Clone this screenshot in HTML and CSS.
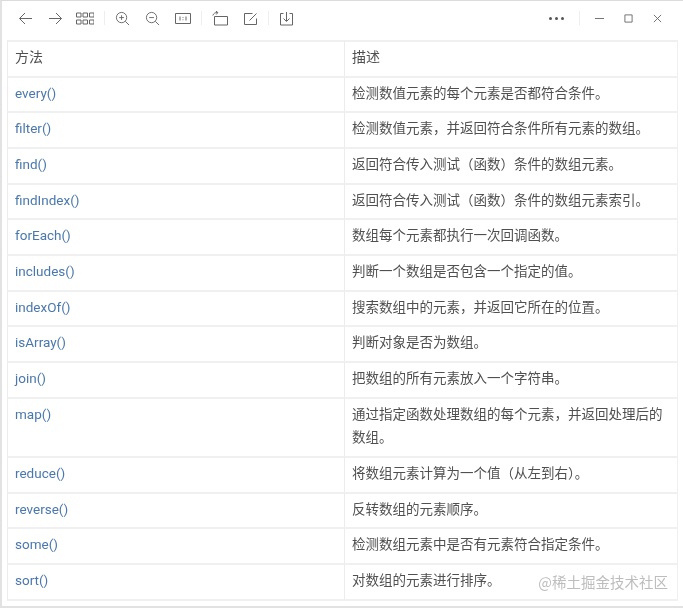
FILE: index.html
```html
<!DOCTYPE html>
<html lang="zh">
<head>
  <meta charset="UTF-8" />
  <title>数组方法</title>
  <link rel="stylesheet" href="styles.css">
</head>
<body>
  <div class="window">
    <div class="toolbar">
      <svg class="icon" viewBox="0 0 15 15"><path d="M14 7.500H1.500M7 2 1.500 7.500 7 13"/></svg>
      <svg class="icon" viewBox="0 0 15 15"><path d="M1 7.500h12.500M8 2l5.500 5.500L8 13"/></svg>
      <svg class="icon grid" viewBox="0 0 18 13"><path d="M.5 1h4.500v4H.5zM7 1h4.500v4H7zM13.500 1H18v4h-4.500zM.5 8h4.500v4H.5zM7 8h4.500v4H7zM13.500 8H18v4h-4.500z"/></svg>
      <span class="sep"></span>
      <svg class="icon" viewBox="0 0 16 16"><circle cx="7" cy="7" r="5.500"/><path d="M4.500 7h5M7 4.500v5M11 11l4 4"/></svg>
      <svg class="icon" viewBox="0 0 16 16"><circle cx="7" cy="7" r="5.500"/><path d="M4.500 7h5M11 11l4 4"/></svg>
      <svg class="icon ratio" viewBox="0 0 16 13"><path d="M.5 1.500h15v10H.5zM5 4.500v4M11 4.500v4M8 5v.8M8 7.400v.8"/></svg>
      <span class="sep"></span>
      <svg class="icon ratio tall" viewBox="0 0 16 15"><path d="M2.500 5.500h13v8.500h-13zM.8 4.500C1.500 2.500 3 1.500 5.500 1.500M3.800 0l2 1.500-1.500 2"/></svg>
      <svg class="icon" viewBox="0 0 15 15"><path d="M13.500 7.500v6h-12v-11h8M6.500 9.500l7-7"/></svg>
      <span class="sep"></span>
      <svg class="icon" viewBox="0 0 15 15"><path d="M4.500 2.500h-3v11.500h12V2.500h-3M7.500 1v9M4.500 7.500l3 3 3-3"/></svg>
      <div class="win-buttons">
        <span class="dots"><i></i><i></i><i></i></span>
        <span class="sep"></span>
        <svg class="icon small" viewBox="0 0 10 10"><path d="M0 5h10"/></svg>
        <svg class="icon small" viewBox="0 0 10 10"><path d="M1 1h8v8H1z"/></svg>
        <svg class="icon small" viewBox="0 0 10 10"><path d="M1 1l8 8M9 1 1 9"/></svg>
      </div>
    </div>
    <table class="methods">
      <thead>
        <tr><th>方法</th><th>描述</th></tr>
      </thead>
      <tbody>
        <tr><td><a>every()</a></td><td>检测数值元素的每个元素是否都符合条件。</td></tr>
        <tr><td><a>filter()</a></td><td>检测数值元素，并返回符合条件所有元素的数组。</td></tr>
        <tr><td><a>find()</a></td><td>返回符合传入测试（函数）条件的数组元素。</td></tr>
        <tr><td><a>findIndex()</a></td><td>返回符合传入测试（函数）条件的数组元素索引。</td></tr>
        <tr><td><a>forEach()</a></td><td>数组每个元素都执行一次回调函数。</td></tr>
        <tr><td><a>includes()</a></td><td>判断一个数组是否包含一个指定的值。</td></tr>
        <tr><td><a>indexOf()</a></td><td>搜索数组中的元素，并返回它所在的位置。</td></tr>
        <tr><td><a>isArray()</a></td><td>判断对象是否为数组。</td></tr>
        <tr><td><a>join()</a></td><td>把数组的所有元素放入一个字符串。</td></tr>
        <tr><td><a>map()</a></td><td>通过指定函数处理数组的每个元素，并返回处理后的数组。</td></tr>
        <tr><td><a>reduce()</a></td><td>将数组元素计算为一个值（从左到右）。</td></tr>
        <tr><td><a>reverse()</a></td><td>反转数组的元素顺序。</td></tr>
        <tr><td><a>some()</a></td><td>检测数组元素中是否有元素符合指定条件。</td></tr>
        <tr><td><a>sort()</a></td><td>对数组的元素进行排序。</td></tr>
      </tbody>
    </table>
    <div class="watermark">@稀土掘金技术社区</div>
  </div>
</body>
</html>
```

FILE: styles.css
```css
html, body {
  margin: 0;
  height: 100%;
}
body {
  background: #fff;
  color: #505050;
  font-family: "Noto Sans CJK SC", sans-serif;
  font-size: 13.5px;
  overflow: hidden;
}
.window {
  position: relative;
  height: 608px;
  box-sizing: border-box;
  padding: 0 4px 0 5px;
  border-top: 1px solid #dcdcdc;
  border-left: 2px solid #e2e2e2;
  border-bottom: 2px solid #e2e2e2;
  filter: blur(0.4px);
}
.toolbar {
  display: flex;
  align-items: center;
  gap: 15px;
  height: 34px;
  padding: 0 0 5px 11px;
  box-sizing: content-box;
}
.icon {
  width: 15px;
  height: 15px;
  fill: none;
  stroke: #666;
  stroke-width: 1;
}
.icon.grid {
  width: 18px;
  height: 13px;
  margin-left: -2px;
}
.icon.ratio {
  width: 16px;
  height: 13px;
}
.icon.tall {
  height: 15px;
}
.icon.small {
  width: 9px;
  height: 9px;
}
.sep {
  width: 1px;
  height: 14px;
  margin: 0 -5px;
  background: #eeeeee;
}
.win-buttons {
  display: flex;
  align-items: center;
  gap: 20px;
  margin-left: auto;
  margin-right: 17px;
}
.win-buttons .sep {
  margin: 0 -5px;
}
.dots {
  display: flex;
  gap: 3px;
}
.dots i {
  width: 3px;
  height: 3px;
  border-radius: 50%;
  background: #555;
}
.methods {
  width: 671px;
  table-layout: fixed;
  border-collapse: separate;
  border-spacing: 0;
  line-height: 23.67px;
}
.methods th,
.methods td {
  border-top: 2px solid #f0f0f0;
  border-left: 1px solid #ececec;
  padding: 3px 7px 7px 7px;
  text-align: left;
  vertical-align: top;
  font-weight: normal;
}
.methods th {
  font-size: 14px;
}
.methods th:last-child,
.methods td:last-child {
  width: 318px;
  border-right: 1px solid #f0f0f0;
  padding-left: 7px;
}
.methods tr:last-child td {
  border-bottom: 2px solid #f0f0f0;
}
.methods a {
  display: block;
  margin: 1px 0 -1px;
  color: #4a78ac;
  font-family: Roboto, sans-serif;
  font-size: 13.5px;
}
.watermark {
  position: absolute;
  right: 15px;
  bottom: 14px;
  color: #bdbdbd;
  font-size: 14.5px;
}
```
